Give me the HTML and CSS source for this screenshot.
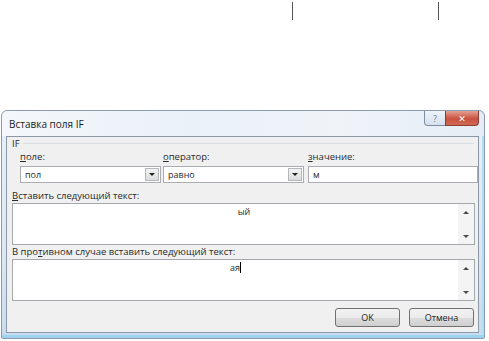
FILE: index.html
```html
<!DOCTYPE html>
<html lang="ru">
<head>
    <meta charset="UTF-8">
    <title>Вставка поля IF</title>
    <link rel="stylesheet" href="styles.css">
</head>
<body>
    <div class="ruler">
        <span class="tick tick-left"></span>
        <span class="tick tick-right"></span>
    </div>
    <div class="window">
        <div class="titlebar">
            <span class="title">Вставка поля IF</span>
            <div class="caption-buttons">
                <span class="cap-btn help">?</span>
                <span class="cap-btn close">✕</span>
            </div>
        </div>
        <div class="client">
            <div class="group-title"><span>IF</span></div>
            <div class="fields">
                <div class="field">
                    <label><u>п</u>оле:</label>
                    <div class="combo">
                        <span class="combo-text">пол</span>
                        <span class="combo-arrow"></span>
                    </div>
                </div>
                <div class="field">
                    <label><u>о</u>ператор:</label>
                    <div class="combo">
                        <span class="combo-text">равно</span>
                        <span class="combo-arrow"></span>
                    </div>
                </div>
                <div class="field field-value">
                    <label><u>з</u>начение:</label>
                    <div class="edit">м</div>
                </div>
            </div>
            <label class="area-label first"><u>В</u>ставить следующий текст:</label>
            <div class="textarea">
                <div class="area-text">ый</div>
                <div class="scroll">
                    <span class="arrow-up"></span>
                    <span class="arrow-down"></span>
                </div>
            </div>
            <label class="area-label">В про<u>т</u>ивном случае вставить следующий текст:</label>
            <div class="textarea">
                <div class="area-text shift">ая<span class="caret"></span></div>
                <div class="scroll">
                    <span class="arrow-up"></span>
                    <span class="arrow-down"></span>
                </div>
            </div>
            <div class="buttons">
                <button class="btn">OK</button>
                <button class="btn">Отмена</button>
            </div>
        </div>
    </div>
</body>
</html>
```
FILE: styles.css
```css
body {
    margin: 0;
    background: #fff;
    font-family: "Open Sans", "DejaVu Sans", sans-serif;
    font-size: 9.5px;
    color: #2a2a2a;
}
.ruler {
    height: 110px;
    display: flex;
}
.tick {
    width: 1px;
    height: 18px;
    margin-top: 2px;
    background: #555;
}
.tick-left {
    margin-left: 292px;
}
.tick-right {
    margin-left: 145px;
}
.window {
    width: 484px;
    margin-left: 1px;
    height: 229px;
    box-sizing: border-box;
    border: 1px solid #8a9bb0;
    border-radius: 6px 6px 2px 2px;
    background: linear-gradient(to bottom, #e9f0f8 0%, #dce8f4 60%, #c8dcef 100%);
    padding: 0 5px 5px 4px;
    box-shadow: inset 0 -3px 0 #9fd2ee, inset -2px 0 0 #b5dcf0;
}
.titlebar {
    height: 25px;
    display: flex;
    align-items: center;
    justify-content: space-between;
    background: linear-gradient(to right, #f4f7fb, #eaf1f8 40%, #f0f4f9 70%, #e5edf6);
    margin: 0 -5px 0 -4px;
    padding: 0 5px 0 7px;
    border-radius: 6px 6px 0 0;
}
.title {
    font-size: 10px;
    color: #1b1b1b;
}
.caption-buttons {
    display: flex;
    align-self: flex-start;
}
.cap-btn {
    height: 14px;
    display: flex;
    align-items: center;
    justify-content: center;
    font-size: 9px;
    border: 1px solid #7f8fa3;
    border-top: none;
}
.help {
    width: 20px;
    color: #6a7d95;
    background: linear-gradient(to bottom, #eef3f9, #d6e1ee);
    border-radius: 0 0 0 4px;
    border-right: none;
}
.close {
    width: 32px;
    color: #fff;
    background: linear-gradient(to bottom, #e3a196, #c9513e 55%, #d06a55);
    border-color: #8b3b30;
    border-radius: 0 0 4px 0;
    font-weight: bold;
}
.client {
    background: #f0f0f0;
    border: 1px solid #8b98a8;
    height: 197px;
    box-sizing: border-box;
    padding: 0 0 0 5px;
    display: flex;
    flex-direction: column;
}
.group-title {
    display: flex;
    align-items: center;
    height: 13px;
}
.group-title::after {
    content: "";
    flex: 1;
    height: 1px;
    background: #d5dfe5;
    margin: 0 4px 0 3px;
}
.fields {
    display: flex;
    padding-left: 8px;
    gap: 2px;
}
.field {
    width: 141px;
    display: flex;
    flex-direction: column;
}
.field-value {
    width: 170px;
    margin-left: 2px;
}
.field label {
    height: 14px;
    line-height: 14px;
    margin-bottom: 2px;
}
u {
    text-decoration-thickness: 1px;
    text-underline-offset: 1px;
}
.combo, .edit {
    height: 17px;
    box-sizing: border-box;
    border: 1px solid #abadb3;
    background: #fff;
    display: flex;
    align-items: center;
    padding-left: 4px;
    font-size: 9px;
}
.combo-text {
    flex: 1;
}
.combo-arrow {
    width: 14px;
    height: 13px;
    margin-right: 1px;
    box-sizing: border-box;
    border: 1px solid #b4b7bc;
    background: linear-gradient(to bottom, #f3f3f3, #dcdcdc);
    position: relative;
}
.combo-arrow::after {
    content: "";
    position: absolute;
    left: 3px;
    top: 4px;
    border-left: 3px solid transparent;
    border-right: 3px solid transparent;
    border-top: 3px solid #222;
}
.area-label {
    height: 14px;
    line-height: 14px;
}
.area-label.first {
    margin-top: 6px;
}
.textarea {
    margin-right: 3px;
    height: 42px;
    box-sizing: border-box;
    border: 1px solid #a5a8ad;
    background: #fff;
    display: flex;
}
.area-text {
    flex: 1;
    text-align: center;
    padding-top: 1px;
    font-size: 9px;
    padding-left: 17px;
}
.area-text.shift {
    padding-left: 0;
}
.caret {
    display: inline-block;
    width: 1px;
    height: 11px;
    background: #000;
    vertical-align: -2px;
}
.scroll {
    width: 16px;
    background: #f4f4f4;
    display: flex;
    flex-direction: column;
    justify-content: space-between;
    align-items: center;
    padding: 7px 0 6px;
}
.arrow-up {
    border-left: 3px solid transparent;
    border-right: 3px solid transparent;
    border-bottom: 3px solid #4a4a4a;
}
.arrow-down {
    border-left: 3px solid transparent;
    border-right: 3px solid transparent;
    border-top: 3px solid #4a4a4a;
}
.buttons {
    display: flex;
    justify-content: flex-end;
    gap: 9px;
    margin-top: 7px;
    padding-right: 4px;
}
.btn {
    width: 65px;
    height: 19px;
    font-family: inherit;
    font-size: 9px;
    color: #1e1e1e;
    border: 1px solid #707070;
    border-radius: 3px;
    background: linear-gradient(to bottom, #f2f2f2 0%, #ebebeb 50%, #dddddd 51%, #cfcfcf 100%);
    padding: 0;
}
```
